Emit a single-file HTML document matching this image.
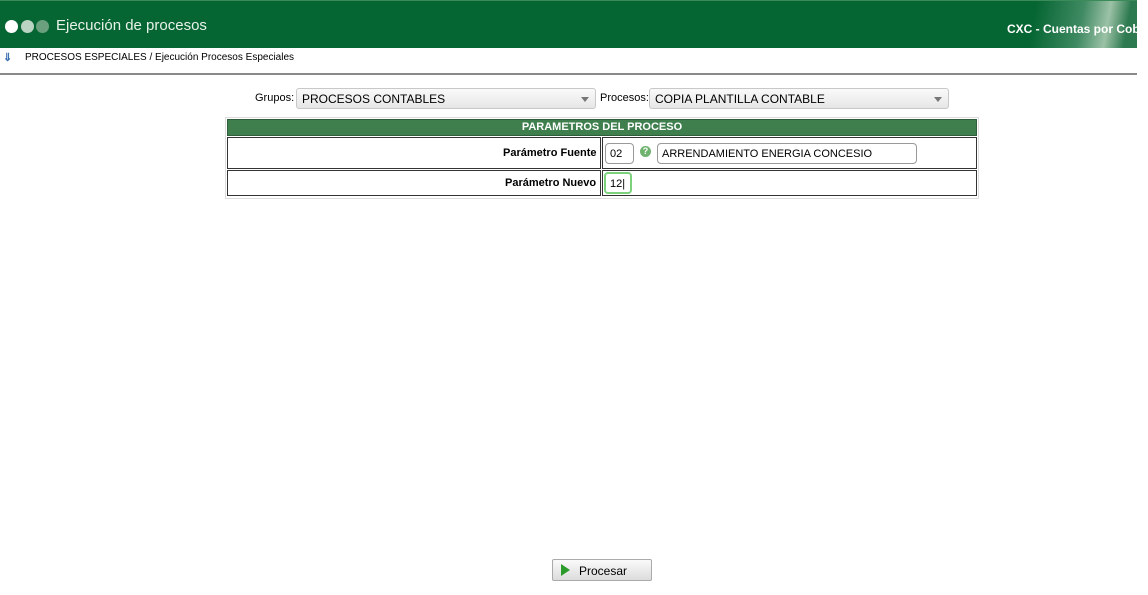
<!DOCTYPE html>
<html><head><meta charset="utf-8"><style>
*{margin:0;padding:0;box-sizing:border-box}
body{width:1148px;height:595px;background:#fff;position:relative;overflow:hidden;font-family:"Liberation Sans",sans-serif;font-size:12px;color:#000}
.a{position:absolute}
.hdr{left:0;top:0;width:1137px;height:48px;background:#066633;border-top:1px solid #3a8a5a}
.dot{width:13px;height:13px;border-radius:50%;top:19px}
.sel{border:1px solid #c8c8c8;border-radius:3px;background:linear-gradient(#fafafa,#e6e6e6);height:21px;font-size:12px;padding:3px 5px}
.sel:after{content:"";position:absolute;right:6px;top:8px;border:4px solid transparent;border-top:5px solid #777}
.box{border:1px solid #333}
.inp{border:1px solid #999;border-radius:4px;background:#fff;font-size:11px;padding:4px 4px}
</style></head><body>
<div class="a hdr">
 <div class="a dot" style="left:5px;background:#fff"></div>
 <div class="a dot" style="left:21px;background:#b9d4c2"></div>
 <div class="a dot" style="left:36px;background:#6aa07e"></div>
 <div class="a" style="left:56px;top:16px;color:#e8f2ea;font-size:15px">Ejecución de procesos</div>
 <div class="a" style="left:1010px;top:0;width:127px;height:47px;background:linear-gradient(100deg,#066633 20%,#3f8a62 55%,#9cc2a6 75%,#2d7a50 90%)"></div>
 <div class="a" style="left:1007px;top:21px;color:#fff;font-weight:bold;font-size:12px;white-space:nowrap;width:130px;overflow:hidden">CXC - Cuentas por Cobrar</div>
</div>
<div class="a" style="left:3px;top:51px;color:#3b6fb0;font-size:11px;font-weight:bold">&#8659;</div>
<div class="a" style="left:25px;top:52px;font-size:10px">PROCESOS ESPECIALES / Ejecución Procesos Especiales</div>
<div class="a" style="left:0;top:73px;width:1137px;height:2px;background:#8a8a8a"></div>

<div class="a" style="left:255px;top:92px;font-size:11px">Grupos:</div>
<div class="a sel" style="left:296px;top:88px;width:300px">PROCESOS CONTABLES</div>
<div class="a" style="left:600px;top:92px;font-size:11px">Procesos:</div>
<div class="a sel" style="left:649px;top:88px;width:300px">COPIA PLANTILLA CONTABLE</div>

<div class="a" style="left:225px;top:117px;width:754px;height:82px;border:1px solid #ddd"></div>
<div class="a" style="left:227px;top:119px;width:750px;height:17px;background:#3f7f4e;border:1px solid #2e5e3a;color:#fff;font-weight:bold;font-size:11px;text-align:center;line-height:15px">PARAMETROS DEL PROCESO</div>
<div class="a box" style="left:227px;top:137px;width:374px;height:32px"></div>
<div class="a box" style="left:602px;top:137px;width:375px;height:32px"></div>
<div class="a box" style="left:227px;top:170px;width:374px;height:26px"></div>
<div class="a box" style="left:602px;top:170px;width:375px;height:26px"></div>
<div class="a" style="left:503px;top:147px;font-weight:bold;font-size:11px">Parámetro Fuente</div>
<div class="a" style="left:505px;top:177px;font-weight:bold;font-size:11px">Parámetro Nuevo</div>
<div class="a inp" style="left:605px;top:143px;width:29px;height:21px">02</div>
<div class="a" style="left:640px;top:146px;width:11px;height:11px;border-radius:50%;background:#6fb36f;color:#fff;font-size:9px;font-weight:bold;text-align:center;line-height:11px">?</div>
<div class="a inp" style="left:657px;top:143px;width:260px;height:21px">ARRENDAMIENTO ENERGIA CONCESIO</div>
<div class="a inp" style="left:604px;top:172px;width:28px;height:22px;border:2px solid #7cd27c">12|</div>

<div class="a" style="left:552px;top:559px;width:100px;height:22px;border:1px solid #aaa;border-radius:2px;background:linear-gradient(#fafafa,#dcdcdc)">
 <div class="a" style="left:8px;top:4px;border:6px solid transparent;border-left:9px solid #2a9a2a;border-right:0"></div>
 <div class="a" style="left:26px;top:4px;font-size:12px">Procesar</div>
</div>
</body></html>
